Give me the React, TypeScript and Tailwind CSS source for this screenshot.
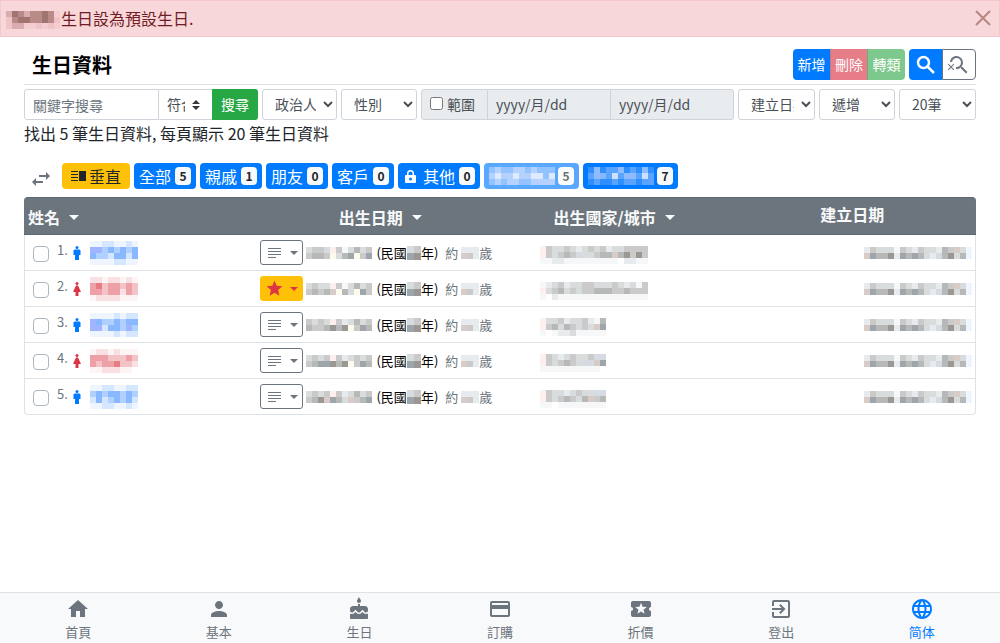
import { useState } from "react";
import {
  MdCake,
  MdCreditCard,
  MdExitToApp,
  MdHome,
  MdLanguage,
  MdLocalPlay,
  MdSearchOff,
  MdStar,
  MdPerson,
  MdSwapHoriz,
} from "react-icons/md";

// one letter per block, "." is left empty
const palette: Record<string, string> = {
  a: "#a0b4ff",
  b: "#8ab8ff",
  c: "#b0d0ff",
  d: "#d4e7ff",
  e: "#eff5ff",
  r: "#eda0a6",
  R: "#e77c85",
  q: "#f4c3c8",
  p: "#f9e1e3",
  o: "#fdf4f5",
  "1": "#9b9893",
  "2": "#9fa6ab",
  "3": "#b7b9b8",
  "4": "#cacaca",
  "5": "#d9dcdc",
  "6": "#e8ebee",
  "7": "#f6f7f8",
  t: "#d9cbc5",
  y: "#fdfbee",
  k: "#fdefed",
  s: "#d6dbe3",
  m: "#a07470",
  n: "#b98a87",
  l: "#d9adb0",
  h: "#efc3c7",
  i: "#f3cdd1",
  w: "#cce0ff",
  v: "#8fbbff",
  u: "#5aa4ff",
  x: "#2f8fff",
  z: "#86b6ff",
};

function Mosaic({ rows, size = 6 }: { rows: string[]; size?: number }) {
  const width = rows[0].length * size;
  const height = rows.length * size;
  return (
    <svg
      width={width}
      height={height}
      viewBox={`0 0 ${width} ${height}`}
      shapeRendering="crispEdges"
      className="block shrink-0"
      aria-hidden="true"
    >
      {rows.map((row, y) =>
        row.split("").map((c, x) =>
          palette[c] ? (
            <rect
              key={`${x}-${y}`}
              x={x * size}
              y={y * size}
              width={size}
              height={size}
              fill={palette[c]}
            />
          ) : null
        )
      )}
    </svg>
  );
}

function Caret() {
  return (
    <svg width="10" height="5" viewBox="0 0 10 5" fill="currentColor" aria-hidden="true">
      <path d="M0 0h10L5 5z" />
    </svg>
  );
}

function LinesIcon() {
  return (
    <svg width="13" height="10" viewBox="0 0 13 10" fill="currentColor" aria-hidden="true">
      <path d="M0 0h13v1H0zM0 3h13v1H0zM0 6h13v1H0zM0 9h8v1H0z" />
    </svg>
  );
}

function SplitIcon() {
  return (
    <svg width="16" height="10" viewBox="0 0 16 10" fill="currentColor" aria-hidden="true">
      <path d="M0 0h7v1H0zM0 3h7v1H0zM0 6h7v1H0zM0 9h7v1H0zM8 0h7v10H8z" />
    </svg>
  );
}

function LockIcon() {
  return (
    <svg width="16" height="16" viewBox="0 0 32 32" fill="currentColor" aria-hidden="true">
      <path
        fillRule="evenodd"
        d="M8 14v-3a7 7 0 0 1 14 0v3h2a2 2 0 0 1 2 2v12a2 2 0 0 1-2 2H6a2 2 0 0 1-2-2V16a2 2 0 0 1 2-2zM11 14h8v-3a4 4 0 0 0-8 0zM15 19a3 3 0 1 0 0 6 3 3 0 0 0 0-6z"
      />
    </svg>
  );
}

function SearchIcon() {
  return (
    <svg
      width="24"
      height="24"
      viewBox="0 0 24 24"
      fill="none"
      stroke="currentColor"
      strokeWidth="2.5"
      aria-hidden="true"
    >
      <circle cx="9.5" cy="9.5" r="5.5" />
      <path d="M13.500 13.500L20 20" />
    </svg>
  );
}

function PersonMark({ female }: { female: boolean }) {
  return (
    <svg
      width="8"
      height="14"
      viewBox="0 0 8 14"
      fill={female ? "#dc3545" : "#007bff"}
      aria-label={female ? "女" : "男"}
    >
      <circle cx="4" cy="1.5" r="1.5" />
      {female ? (
        <path d="M3 3.500h2L8 10H5.500v4h-3v-4H0z" />
      ) : (
        <path d="M1.500 3.500h5L7.500 4.500V9H6v5H2V9H.5V4.500z" />
      )}
    </svg>
  );
}

const people = [
  {
    id: 1,
    female: false,
    starred: false,
    name: ["eeddeede", "aacbcbcb", "bccdbbdb", "eeeeddee"],
    date: ["5445k475354", "4334y532y42"],
    place: ["k45545654546554444", "k45434s55433t31414", "7766777777777.6677"],
  },
  {
    id: 2,
    female: true,
    starred: true,
    name: ["ppoppopo", "rRqrrqrq", "rrqrrprq", "oppppooo"],
    date: ["5455k475354", "4343ty35y24"],
    place: ["765465544555456574", "k54354544333443444", "7.6777777777777777"],
  },
  {
    id: 3,
    female: false,
    starred: false,
    name: ["eeeededd", "abccbcbb", "aadbbcac", "eeeededd"],
    date: ["4545k465354", "3443131y423"],
    place: ["k5546554673", "k43534545t2", "7.766577777"],
  },
  {
    id: 4,
    female: true,
    starred: false,
    name: ["oppopooo", "rrrqqqrq", "rqrrRqqp", "oopppoo."],
    date: ["5454k465454", "4322131y423"],
    place: ["k45654554ss", "k454345sst2", "7777777777."],
  },
  {
    id: 5,
    female: false,
    starred: false,
    name: ["eeddeedd", "cbcbbcbc", "dbdcbcbd", "eeddeede"],
    date: ["5454k465354", "431t235t432"],
    place: ["k45565455ss", "k4543453t43", "77.77777777"],
  },
];

const createdAt = ["645557456455634t5e", "t23316232356s3153e"];

const categories = [
  { label: "全部", count: 5 },
  { label: "親戚", count: 1 },
  { label: "朋友", count: 0 },
  { label: "客戶", count: 0 },
];

const navItems = [
  { label: "首頁", icon: MdHome },
  { label: "基本", icon: MdPerson },
  { label: "生日", icon: MdCake },
  { label: "訂購", icon: MdCreditCard },
  { label: "折價", icon: MdLocalPlay },
  { label: "登出", icon: MdExitToApp },
  { label: "简体", icon: MdLanguage, active: true },
];

const columns = [
  { label: "姓名", sortable: true, className: "w-[24%] pl-1 text-left rounded-tl" },
  { label: "出生日期", sortable: true, className: "w-[26%] pl-2 text-center" },
  { label: "出生國家/城市", sortable: true, className: "w-[24%] text-center" },
  { label: "建立日期", sortable: false, className: "w-[26%] pb-1 text-center rounded-tr" },
];

const selectClass =
  "h-[31px] rounded-[3px] border border-[#ced4da] bg-white pl-2 pr-1 pb-0.5 text-sm text-[#495057]";

const pillClass =
  "flex h-[26px] items-center rounded bg-[#007bff] px-[5px] text-base text-white";

function Badge({ count }: { count: number }) {
  return (
    <span className="flex h-[18px] w-4 items-center justify-center rounded bg-[#f8f9fa] text-xs font-bold text-[#212529]">
      {count}
    </span>
  );
}

export default function App() {
  const [showAlert, setShowAlert] = useState(true);
  const [keyword, setKeyword] = useState("");
  const [range, setRange] = useState(false);

  return (
    <div className="flex min-h-screen flex-col bg-white font-['Noto_Sans_CJK_TC',sans-serif] text-[#212529]">
      {showAlert && (
        <div
          role="alert"
          className="flex h-[37px] items-center border border-[#f5c6cb] bg-[#f8d7da] pr-2 pb-0.5 pl-[5px] text-base text-[#721c24]"
        >
          <span className="pt-1 pr-px">
            <Mosaic rows={["lmnlnnmni", "hnmmnnmnh", "hlliihihi"]} />
          </span>
          <span>生日設為預設生日.</span>
          <button
            aria-label="關閉"
            onClick={() => setShowAlert(false)}
            className="ml-auto text-[#b98583]"
          >
            <svg width="16" height="16" viewBox="0 0 16 16" stroke="currentColor" strokeWidth="2">
              <path d="M1 1l14 14M15 1L1 15" />
            </svg>
          </button>
        </div>
      )}

      <main className="px-6 pt-3">
        <header className="flex h-9 items-start justify-between border-b border-[#dee2e6]">
          <h1 className="pl-2 text-xl leading-8 font-bold text-black">生日資料</h1>
          <div className="flex gap-1 text-sm text-white">
            <div className="flex h-[31px] overflow-hidden rounded">
              <button className="w-[37px] bg-[#007bff] pb-0.5">新增</button>
              <button disabled className="w-[37px] border-l border-[#b9808c] bg-[#e77d87] pb-0.5">
                刪除
              </button>
              <button disabled className="w-[38px] border-l border-[#7aa77f] bg-[#7dc88c] pb-0.5">
                轉類
              </button>
            </div>
            <div className="flex h-[31px]">
              <button
                aria-label="搜尋"
                className="flex w-[33px] items-center justify-center rounded-l bg-[#007bff]"
              >
                <SearchIcon />
              </button>
              <button
                aria-label="清除搜尋"
                className="flex w-[34px] items-center justify-center rounded-r border border-[#6c757d] text-[#6c757d]"
              >
                <MdSearchOff size={24} />
              </button>
            </div>
          </div>
        </header>

        <form className="mt-1 flex gap-1" onSubmit={(e) => e.preventDefault()}>
          <div className="flex h-[31px] min-w-0 flex-1">
            <input
              type="text"
              aria-label="關鍵字搜尋"
              placeholder="關鍵字搜尋"
              value={keyword}
              onChange={(e) => setKeyword(e.target.value)}
              className="min-w-0 flex-1 rounded-l-[3px] border border-[#ced4da] px-2 text-sm placeholder:text-[#6c757d]"
            />
            <div className="relative w-[53px]">
              <select
                aria-label="比對方式"
                className="h-full w-full appearance-none border-y border-[#ced4da] bg-white pr-[27px] pb-0.5 pl-2 text-sm text-[#495057]"
              >
                <option>符合</option>
                <option>包含</option>
              </select>
              <svg
                width="8"
                height="10"
                viewBox="0 0 4 5"
                fill="#343a40"
                className="pointer-events-none absolute top-[11px] right-3"
              >
                <path d="M2 0L0 2h4zm0 5L0 3h4z" />
              </svg>
            </div>
            <button
              type="submit"
              className="w-[46px] rounded-r-[3px] bg-[#28a745] pb-0.5 text-sm text-white"
            >
              搜尋
            </button>
          </div>
          <select aria-label="類別" className={`${selectClass} w-[75px]`}>
            <option>政治人物</option>
          </select>
          <select aria-label="性別" className={`${selectClass} w-[76px]`}>
            <option>性別</option>
            <option>男</option>
            <option>女</option>
          </select>
          <div className="flex h-[31px] overflow-hidden rounded-[3px] border border-[#ced4da] bg-[#e9ecef] text-sm text-[#495057]">
            <label className="flex w-[65px] items-center gap-1 pb-0.5 pl-2">
              <input
                type="checkbox"
                checked={range}
                onChange={(e) => setRange(e.target.checked)}
                className="size-[13px]"
              />
              範圍
            </label>
            <input
              type="text"
              aria-label="開始日期"
              placeholder="yyyy/月/dd"
              disabled={!range}
              className="w-[123px] border-l border-[#ced4da] px-2 pb-0.5 placeholder:text-[#495057]"
            />
            <input
              type="text"
              aria-label="結束日期"
              placeholder="yyyy/月/dd"
              disabled={!range}
              className="w-[123px] border-l border-[#ced4da] px-2 pb-0.5 placeholder:text-[#495057]"
            />
          </div>
          <select aria-label="排序欄位" className={`${selectClass} w-[77px]`}>
            <option>建立日期</option>
          </select>
          <select aria-label="排序方向" className={`${selectClass} w-[76px]`}>
            <option>遞增</option>
            <option>遞減</option>
          </select>
          <select aria-label="每頁筆數" className={`${selectClass} w-[77px]`}>
            <option>20筆</option>
            <option>50筆</option>
          </select>
        </form>

        <p className="text-base leading-[26px]">找出 5 筆生日資料, 每頁顯示 20 筆生日資料</p>

        <div className="mt-[17px] mb-2 flex h-[26px] gap-1 whitespace-nowrap">
          <MdSwapHoriz size={24} className="mt-1 mr-[5px] ml-[5px] shrink-0 text-[#6c757d]" />
          <button className="flex h-[26px] items-center gap-0.5 rounded bg-[#ffc107] px-[9px] text-base">
            <SplitIcon />
            垂直
          </button>
          {categories.map((c) => (
            <button key={c.label} className={`${pillClass} gap-1`}>
              {c.label}
              <Badge count={c.count} />
            </button>
          ))}
          <button className={`${pillClass} gap-1`}>
            <LockIcon />
            其他
            <Badge count={0} />
          </button>
          <button disabled aria-label="自訂分類一" className={`${pillClass} gap-[3px] opacity-65`}>
            <Mosaic rows={["uvuuvvuvuuu", "vwvvwvvwwuw", "uvuvvuuvvvv"]} />
            <Badge count={5} />
          </button>
          <button aria-label="自訂分類二" className={`${pillClass} gap-[3px]`}>
            <Mosaic rows={["xvxuuvxuxvx", "uvzuwuvvuwu", "xuxxuxuuxuu"]} />
            <Badge count={7} />
          </button>
        </div>

        <table className="w-full table-fixed border-separate border-spacing-0">
          <thead>
            <tr>
              {columns.map((col) => (
                <th
                  key={col.label}
                  className={`h-[38px] border-y border-[#5f676e] bg-[#6c757d] text-base text-[#f8f9fa] ${col.className}`}
                >
                  {col.sortable ? (
                    <button className="inline-flex items-center gap-[9px] align-middle font-bold">
                      {col.label}
                      <Caret />
                    </button>
                  ) : (
                    col.label
                  )}
                </th>
              ))}
            </tr>
          </thead>
          <tbody className="text-[13px]">
            {people.map((p) => (
              <tr key={p.id} className="group">
                <td className="h-9 border-b border-l border-[#dee2e6] pl-2 group-last:rounded-bl">
                  <div className="flex items-center">
                    <input
                      type="checkbox"
                      aria-label={`選取第 ${p.id} 筆`}
                      className="mt-0.5 size-4 appearance-none rounded border border-[#adb5bd] bg-white checked:bg-[#007bff]"
                    />
                    <span className="ml-2 w-4 pb-1.5 text-[#6c757d]">{p.id}.</span>
                    <PersonMark female={p.female} />
                    <a href="#person" aria-label={`第 ${p.id} 筆`} className="ml-[9px]">
                      <Mosaic rows={p.name} />
                    </a>
                  </div>
                </td>
                <td className="border-b border-[#dee2e6] pl-2 whitespace-nowrap">
                  <div className="flex items-center">
                    <button
                      aria-label="標記"
                      className={`flex h-[25px] w-[43px] shrink-0 items-center justify-between rounded-[3px] border pr-1 ${
                        p.starred
                          ? "border-[#ffc107] bg-[#ffc107] pl-1 text-[#dc3545]"
                          : "border-[#6c757d] bg-white pl-[7px] text-[#6c757d]"
                      }`}
                    >
                      {p.starred ? <MdStar size={19} /> : <LinesIcon />}
                      <svg width="8" height="4" viewBox="0 0 8 4" fill="currentColor">
                        <path d="M0 0h8L4 4z" />
                      </svg>
                    </button>
                    <span className="ml-[3px]">
                      <Mosaic rows={p.date} />
                    </span>
                    <span className="ml-1 text-black">(民國</span>
                    <Mosaic rows={["54", "21"]} size={7} />
                    <span className="text-black">年)</span>
                    <span className="ml-[7px] text-[#6c757d]">約</span>
                    <span className="ml-[3px]">
                      <Mosaic rows={["666", "t46"]} />
                    </span>
                    <span className="text-[#6c757d]">歲</span>
                  </div>
                </td>
                <td className="border-b border-[#dee2e6] pt-1 pl-10">
                  <Mosaic rows={p.place} />
                </td>
                <td className="border-r border-b border-[#dee2e6] pr-[3px] group-last:rounded-br">
                  <div className="flex justify-end">
                    <Mosaic rows={createdAt} />
                  </div>
                </td>
              </tr>
            ))}
          </tbody>
        </table>
      </main>

      <nav className="mt-auto flex h-[51px] border-t border-[#dee2e6] bg-[#f8f9fa] px-2 pt-1">
        {navItems.map(({ label, icon: Icon, active }) => (
          <a
            key={label}
            href="#nav"
            className={`flex flex-1 flex-col items-center text-[13px] leading-[22px] ${
              active ? "text-[#007bff]" : "text-[#6c757d]"
            }`}
          >
            <Icon size={24} className="shrink-0" />
            {label}
          </a>
        ))}
      </nav>
    </div>
  );
}
